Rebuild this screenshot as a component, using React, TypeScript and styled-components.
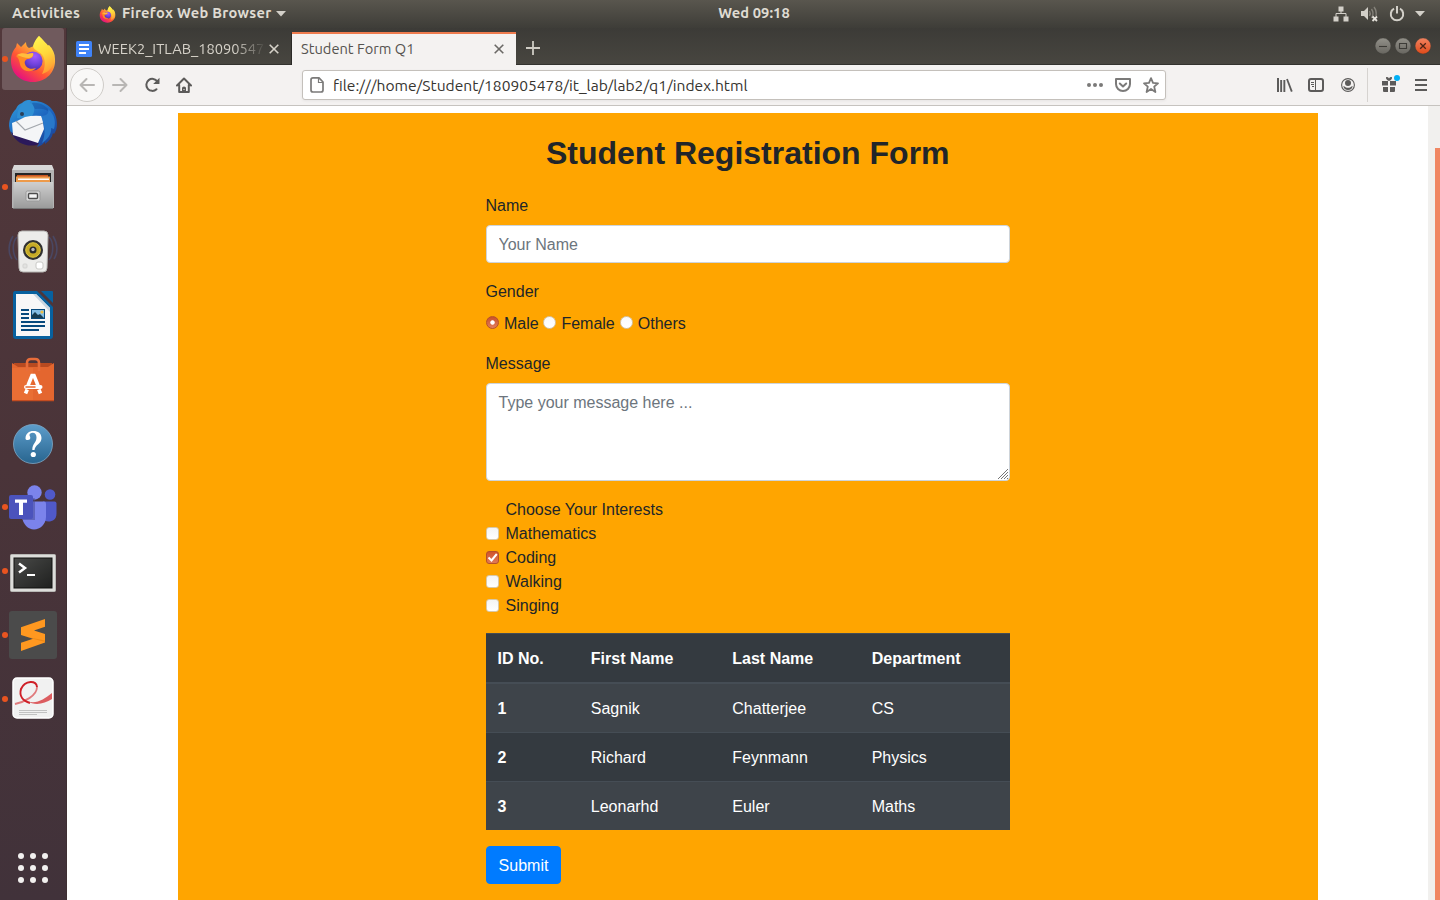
import React from 'react';
import styled, { createGlobalStyle } from 'styled-components';

const GlobalStyle = createGlobalStyle`
  * { box-sizing: border-box; }
  body { margin: 0; overflow: hidden; background: #fff; }
  svg { display: block; flex: none; }
`;

const uiFont = `'Ubuntu', 'Noto Sans', 'Open Sans', sans-serif`;
const pageFont = `'Liberation Sans', Arial, sans-serif`;

const Desktop = styled.div`
  width: 1440px;
  height: 900px;
  display: grid;
  grid-template: 28px 872px / 67px 1373px;
  overflow: hidden;
  font-family: ${uiFont};
`;

/* ---------- system bar ---------- */

const SystemBar = styled.header`
  grid-column: 1 / 3;
  display: grid;
  grid-template-columns: 1fr auto 1fr;
  align-items: center;
  padding: 0 15px 0 12px;
  background: linear-gradient(#59564e, #3e3d38);
  color: #dfdbd2;
  font-weight: 700;
  font-size: 14.667px;
  line-height: 26px;
  white-space: nowrap;
`;

const BarGroup = styled.div<{ $end?: boolean }>`
  display: flex;
  align-items: center;
  height: 28px;
  justify-content: ${(p) => (p.$end ? 'flex-end' : 'flex-start')};
`;

const BarText = styled.span<{ $width?: number; $spacing?: number }>`
  width: ${(p) => (p.$width ? `${p.$width}px` : 'auto')};
  padding-bottom: 2px;
  letter-spacing: ${(p) => p.$spacing ?? 0}px;
`;

const Clock = styled(BarText)`
  margin-left: 71px;
`;

const Gap = styled.span<{ $w: number }>`
  flex: none;
  width: ${(p) => p.$w}px;
`;

/* ---------- dock ---------- */

const DockColumn = styled.nav`
  display: flex;
  flex-direction: column;
  background: linear-gradient(#52383b, #4a3439 50%, #41323a);
  border-right: 1px solid #3f2f33;
`;

const DockItem = styled.div<{ $active?: boolean; $drop?: number }>`
  display: flex;
  align-items: center;
  justify-content: center;
  width: 62px;
  height: 62px;
  margin: 0 2px 2px;
  padding-top: ${(p) => Math.max(p.$drop ?? 0, 0)}px;
  padding-bottom: ${(p) => Math.max(-(p.$drop ?? 0), 0)}px;
  flex: none;
  border-radius: 3px;
  position: relative;
  background: ${(p) => (p.$active ? '#705a5d' : 'transparent')};
`;

const RunningDot = styled.span`
  position: absolute;
  left: 0;
  top: 28px;
  width: 6px;
  height: 6px;
  border-radius: 50%;
  background: #e95420;
`;

const AppsButton = styled.div`
  display: grid;
  grid-template-columns: repeat(3, 6px);
  gap: 6px;
  margin: auto 0 17px 18px;
`;

const AppsDot = styled.span`
  width: 6px;
  height: 6px;
  border-radius: 50%;
  background: #f2f0ef;
`;

/* ---------- browser window ---------- */

const Browser = styled.main`
  display: flex;
  flex-direction: column;
  min-width: 0;
`;

const TabStrip = styled.div`
  display: flex;
  align-items: flex-end;
  height: 37px;
  flex: none;
  background: linear-gradient(#3c3b37, #484640);
  box-shadow: inset 0 -1px #33322e;
`;

const Tab = styled.div<{ $active?: boolean }>`
  display: flex;
  align-items: center;
  width: ${(p) => (p.$active ? 224 : 225)}px;
  height: 33px;
  padding: 0 12px 1px 9px;
  font-size: 14.667px;
  color: ${(p) => (p.$active ? '#55534f' : '#d6d2c9')};
  background: ${(p) => (p.$active ? '#f4f2f1' : 'transparent')};
  border-top: 2px solid ${(p) => (p.$active ? '#ee7b4e' : 'transparent')};
  border-right: ${(p) => (p.$active ? 'none' : '1px solid #2b2a27')};
`;

const TabTitle = styled.span<{ $fade?: boolean }>`
  flex: 1;
  min-width: 0;
  overflow: hidden;
  white-space: nowrap;
  line-height: 22px;
  ${(p) => p.$fade && 'mask-image: linear-gradient(to right, #000 136px, transparent 168px);'}
`;

const NewTab = styled.div`
  display: flex;
  align-items: center;
  height: 34px;
  margin-left: 10px;
`;

const WindowButtons = styled.div`
  display: flex;
  gap: 4px;
  margin: 0 9px 11px auto;
`;

const Toolbar = styled.div`
  display: flex;
  align-items: center;
  height: 41px;
  flex: none;
  padding: 0 12px 0 3px;
  background: #f4f2f1;
  border-bottom: 1px solid #c6c3bf;
`;

const BackButton = styled.span`
  display: flex;
  align-items: center;
  justify-content: center;
  width: 34px;
  height: 34px;
  border: 1px solid #cfccc8;
  border-radius: 50%;
  background: #f9f8f7;
`;

const UrlBar = styled.div`
  display: flex;
  align-items: center;
  width: 864px;
  height: 30px;
  padding: 0 6px 0 7px;
  border: 1px solid #c4c0bb;
  border-radius: 3px;
  background: #fff;
  box-shadow: 0 1px 3px rgba(0, 0, 0, 0.06);
`;

const Url = styled.span`
  flex: 1;
  margin-left: 9px;
  padding-bottom: 1px;
  font-size: 15.6px;
  line-height: 22px;
  color: #36342f;
  white-space: nowrap;
`;

const Divider = styled.span`
  width: 1px;
  height: 34px;
  background: #d6d3d0;
`;

const Viewport = styled.div`
  display: flex;
  flex: 1;
  min-height: 0;
  background: #fff;
`;

const PageArea = styled.div`
  flex: 1;
  padding: 7px 110px 0 111px;
`;

const ScrollTrack = styled.div`
  width: 12px;
  padding: 42px 0 0 7px;
  background: #f1f0ee;
`;

const ScrollThumb = styled.div`
  height: 100%;
  background: #f08763;
`;

/* ---------- student form ---------- */

const Container = styled.section`
  height: 100%;
  padding: 21px 308px 0 307.5px;
  background: #ffa500;
  color: #212529;
  font: 16px/24px ${pageFont};
`;

const Title = styled.h1`
  margin: 0 -40px 21px;
  font-size: 32px;
  line-height: 38px;
  font-weight: 700;
  text-align: center;
`;

const Field = styled.div`
  margin-bottom: 16px;
`;

const Label = styled.label`
  display: block;
  padding-top: 1px;
  margin-bottom: 7px;
`;

const inputBase = `
  display: block;
  width: 100%;
  padding: 7px 12px 5px;
  border: 1px solid #ced4da;
  border-radius: 4px;
  background: #fff;
  color: #495057;
  font: 16px/24px ${pageFont};
  &::placeholder { color: #6c757d; opacity: 1; }
`;

const TextInput = styled.input`
  ${inputBase}
  height: 38px;
`;

const MessageWrap = styled.div`
  position: relative;
`;

const TextArea = styled.textarea`
  ${inputBase}
  height: 98px;
  resize: none;
`;

const Grip = styled.svg`
  position: absolute;
  right: 1px;
  bottom: 1px;
`;

const RadioRow = styled.div`
  display: flex;
  height: 24px;
  padding-top: 1px;
`;

const RadioOption = styled.label<{ $w: number }>`
  display: flex;
  width: ${(p) => p.$w}px;
  gap: 5px;
  white-space: nowrap;
`;

const RadioMark = styled.span<{ $on?: boolean }>`
  flex: none;
  width: 13px;
  height: 13px;
  margin: 4px 0 0 0.5px;
  border-radius: 50%;
  border: 1px solid ${(p) => (p.$on ? '#b5502a' : '#d3c6ae')};
  background: ${(p) =>
    p.$on
      ? 'radial-gradient(circle, #fff 0 1.8px, transparent 2.6px), linear-gradient(#c9502a, #e27e5c)'
      : 'linear-gradient(#fafafa, #fff)'};
`;

const CheckRow = styled.label`
  display: flex;
  height: 24px;
  padding-top: 1px;
  gap: 6px;
`;

const CheckMark = styled.span<{ $state: 'none' | 'on' | 'off' }>`
  flex: none;
  width: 13px;
  height: 13px;
  margin: 5px 0.5px 0 0.5px;
  border-radius: 3px;
  visibility: ${(p) => (p.$state === 'none' ? 'hidden' : 'visible')};
  border: 1px solid ${(p) => (p.$state === 'on' ? '#b5502a' : '#d8c8a8')};
  background: ${(p) => (p.$state === 'on' ? 'linear-gradient(#d0542c, #e07a57)' : 'linear-gradient(#f4f4f4, #fff)')};
`;

const Table = styled.div`
  margin-top: 16px;
  background: #343a40;
  color: #fff;
`;

const TableRow = styled.div<{ $kind: 'head' | 'odd' | 'even' }>`
  display: grid;
  grid-template-columns: 93.3px 141.5px 139.4px 1fr;
  height: ${(p) => (p.$kind === 'head' ? 50 : 49)}px;
  border-top: 1px solid #454d55;
  border-bottom: ${(p) => (p.$kind === 'head' ? '1px solid #454d55' : 'none')};
  background: ${(p) => (p.$kind === 'odd' ? '#3e444a' : 'transparent')};
`;

const Cell = styled.span<{ $bold?: boolean }>`
  padding: 13px 12px 0;
  font-weight: ${(p) => (p.$bold ? 700 : 400)};
`;

const Submit = styled.button`
  display: block;
  width: 75px;
  height: 38px;
  margin: 16px 0 0 0.5px;
  padding: 2px 0 0;
  border: 1px solid #007bff;
  border-radius: 4px;
  background: #007bff;
  color: #fff;
  font: 16px/24px ${pageFont};
`;

/* ---------- drawings ---------- */

const FirefoxLogo = ({ size, id }: { size: number; id: string }) => (
  <svg width={size} height={size} viewBox="0 0 48 48">
    <defs>
      <linearGradient id={`${id}a`} x1="0.85" y1="0.1" x2="0.25" y2="0.95">
        <stop offset="0" stopColor="#fff44f" />
        <stop offset="0.35" stopColor="#ffa436" />
        <stop offset="0.65" stopColor="#ff5634" />
        <stop offset="1" stopColor="#e5127e" />
      </linearGradient>
      <radialGradient id={`${id}b`} cx="0.6" cy="0.25" r="0.8">
        <stop offset="0" stopColor="#a45cff" />
        <stop offset="0.6" stopColor="#6b40d8" />
        <stop offset="1" stopColor="#4b2a9e" />
      </radialGradient>
      <linearGradient id={`${id}c`} x1="0.3" y1="0" x2="0.6" y2="1">
        <stop offset="0" stopColor="#fff44f" />
        <stop offset="0.5" stopColor="#ffd83b" />
        <stop offset="1" stopColor="#ff9a33" />
      </linearGradient>
    </defs>
    <path fill={`url(#${id}a)`} d="M30 1c4 3 6 7 8 10l2-1c4 4 6 9 6 14 1 13-9 23-22 23C11 47 2 38 2 26c0-5 1-9 5-14l1-4 4 4 5-5c0 3 1 5 3 6l5-2c1-4 2-7 5-10z" />
    <path fill={`url(#${id}c)`} d="M30 1c3 4 7 6 10 11 5 5 6 11 4 17-2 6-7 9-11 10 3-5 4-13 1-18-3-5-9-5-10-10 1-4 3-7 6-10z" />
    <circle cx="24" cy="26" r="9.6" fill={`url(#${id}b)`} />
    <path fill="#ff8a24" d="M7 21c3-3 7-3 11-2l6-1c1 3-1 5-4 6-3 0-5 2-4 5 1 4 6 6 11 4-4 5-12 4-15-1-2-4-1-8-5-11z" />
    <path fill="#ffbd3e" d="M8 20c3-2 7-2 10-1l6-1c1 2-1 5-4 5-5 0-8-2-12-3z" />
  </svg>
);

const Thunderbird = () => (
  <svg width="50" height="50" viewBox="0 0 50 50">
    <defs>
      <linearGradient id="tb" x1="0.2" y1="0" x2="0.9" y2="1">
        <stop offset="0" stopColor="#2f96d8" />
        <stop offset="0.5" stopColor="#1c63be" />
        <stop offset="1" stopColor="#1b3e91" />
      </linearGradient>
    </defs>
    <path fill="url(#tb)" d="M14 4c3-3 7-4 10-2 14-1 25 9 25 23 0 4-1 7-3 10l-1-1c-1 5-4 8-8 11v-2c-2 2-4 4-8 5l2-4C15 48 2 39 1 27 1 20 4 14 8 10c1-3 3-5 6-6z" />
    <path fill="#2f8fd4" d="M9 19C9 9 15 1 23 1c-2 2-1 3 1 4 3 3 3 8 0 12l-6 3z" />
    <path fill="#123e8b" d="M24 4c8-1 15 3 19 10-5-4-9-5-16-4z" opacity=".35" />
    <path fill="#2b195b" d="M3 33l8 4 20 7-2 2c-10 2-21-1-26-13z" />
    <path fill="#f4f5f7" d="M4 24l5-2 8-4q8-2 17-1l2 13-6 14-25-8z" />
    <path fill="none" stroke="#a3a7ad" strokeWidth="1.100" d="M8 22l9 9 18-7" />
    <path fill="#2878ca" d="M33 17c7 0 8-4 7-7 7 6 8 13 6 20l-3-1c1 6-4 12-9 15 4-8 3-18-1-27z" />
    <circle cx="14" cy="15" r="2" fill="#2a3f57" />
  </svg>
);

const FilesIcon = () => (
  <svg width="44" height="46" viewBox="0 0 44 46">
    <defs>
      <linearGradient id="fi" x1="0" y1="0" x2="0" y2="1">
        <stop offset="0" stopColor="#cfcfcf" />
        <stop offset="1" stopColor="#9b9b9b" />
      </linearGradient>
    </defs>
    <path fill="#d8d8d8" d="M3 1h38l2 5v38H1V6z" />
    <path fill="#b4b4b4" d="M1 6h42v38H1z" />
    <rect x="4" y="9" width="36" height="11" fill="#252525" />
    <path fill="#c95520" d="M6 11h31v7H6z" />
    <path fill="#ed9a4a" d="M5 12.500h34v7H5z" />
    <path fill="#fff" d="M7 14.500h31v1.500H7z" />
    <rect x="2.500" y="18" width="39.500" height="26" fill="url(#fi)" />
    <path fill="#777" d="M2 44h40v1H2z" />
    <rect x="15" y="27" width="14" height="10" rx="1.500" fill="#d8d8d8" stroke="#999" />
    <rect x="17.500" y="29.500" width="9" height="5" rx="1" fill="#f5f5f5" stroke="#4d4d4d" strokeWidth="1.400" />
  </svg>
);

const Speaker = () => (
  <svg width="50" height="46" viewBox="0 0 50 46">
    <g fill="none" stroke="#46588a" strokeWidth="1.600" opacity=".5">
      <path d="M9 8C4 13 4 25 9 31M5 7C0 15 0 24 4 30M41 8c5 5 5 17 0 23M45 7c5 8 5 17 1 23" />
    </g>
    <path fill="#ececea" stroke="#b6b6b3" d="M14 2h22q4 0 4 4l-1 33q0 4-4 4H15q-4 0-4-4L10 6q0-4 4-4z" />
    <circle cx="25" cy="21" r="10" fill="#313131" />
    <circle cx="25" cy="21" r="7.300" fill="#c6aa26" stroke="#e0c940" />
    <circle cx="25" cy="21" r="3.500" fill="#292a2d" />
    <circle cx="25" cy="20.500" r="1.700" fill="#b9b9b9" />
    <rect x="28" y="33" width="7" height="7" rx="2" fill="#fff" stroke="#c9c9c6" />
    <rect x="15" y="35" width="4" height="4" rx="1" fill="#e2e2e0" stroke="#d3d3d1" />
  </svg>
);

const WriterIcon = () => (
  <svg width="42" height="48" viewBox="0 0 42 48">
    <path fill="#07619f" d="M3 0h22l16 16v29q0 3-3 3H4q-3 0-3-3V3q0-3 2-3z" />
    <path fill="#f7f7f7" d="M4 3h20l14 14v28H4z" />
    <path fill="#c9d5e0" d="M24 3l14 14v4L21 3z" />
    <path fill="#07619f" d="M29 0h11q1 0 1 1v11z" />
    <path fill="#07497c" d="M9 18h8v2H9zm0 4h8v2H9zm0 4h8v2H9zm0 4h24v2H9zm0 4h24v2H9zm0 4h18v2H9z" />
    <rect x="19.500" y="18.500" width="13" height="9" fill="#83bde4" stroke="#07497c" />
    <circle cx="30" cy="21" r="1.600" fill="#efbe42" />
    <path fill="#173c50" d="M20 27v-3l3-3 3 3 2-1 4 4z" />
  </svg>
);

const SoftwareIcon = () => (
  <svg width="44" height="46" viewBox="0 0 44 46">
    <path fill="#b84a20" d="M3 6h38l2 6H1z" />
    <path fill="#e4662f" d="M1 6l6 4h30l6-4v37H1z" />
    <path fill="#f17b3d" d="M1 11h21v32H1z" opacity=".4" />
    <path fill="none" stroke="#e86d3a" strokeWidth="2.600" d="M16 14V6q0-4 4-4h4q4 0 4 4v8" />
    <path fill="#c44c20" d="M1 43h42v1.300H1z" />
    <path fill="none" stroke="#fff" strokeWidth="3.600" d="M14.500 36.500l1.700-4M29.500 36.500l-1.700-4M17 28.500l4-10h2l4 10" />
    <path stroke="#fff" strokeWidth="4" strokeLinecap="round" d="M15 30h14.500" />
    <path stroke="#e66a32" strokeWidth="1.500" strokeLinecap="round" d="M15 30h9" />
  </svg>
);

const HelpIcon = () => (
  <svg width="42" height="42" viewBox="0 0 42 42">
    <defs>
      <linearGradient id="he" x1="0" y1="0" x2="0" y2="1">
        <stop offset="0" stopColor="#5d9dcb" />
        <stop offset="1" stopColor="#28658f" />
      </linearGradient>
    </defs>
    <circle cx="21" cy="21" r="19.500" fill="url(#he)" stroke="#7fa9c8" strokeWidth=".8" />
    <path fill="#fff" d="M13.500 15.500c0-5 3.500-7.500 8-7.500s8 2.500 8 7c0 6-6.500 6.500-7 12h-2.200c0-6.500 4.200-7.500 4.200-12.500 0-3-1.500-4.700-3.800-4.700-2 0-3.200 1-3.200 2.200 0 1 .8 1.500.8 2.700 0 1.300-1 2.300-2.400 2.300s-2.400-.5-2.400-1.500z" />
    <circle cx="21.300" cy="31.500" r="2.600" fill="#fff" />
  </svg>
);

const TeamsIcon = () => (
  <svg width="50" height="46" viewBox="0 0 50 46">
    <circle cx="42" cy="10.500" r="5.300" fill="#5059c9" />
    <path fill="#5059c9" d="M35 17.500h11.500q2 0 2 2v10c0 6-4 8-8 8-3 0-5-1-7-3z" />
    <circle cx="26.500" cy="8.500" r="7.200" fill="#7b83eb" />
    <path fill="#7b83eb" d="M16 17.500h20q2 0 2 2V33c0 7-6 12.500-12 12.500S15 40 14 33z" />
    <path fill="#444791" d="M15 14h11q1 0 1 1v21H15z" opacity=".5" />
    <rect x="1" y="11" width="24" height="24" rx="2" fill="#4b53bc" />
    <path fill="#fff" d="M7 15.500h12v3.300h-4V31h-4V18.800H7z" />
  </svg>
);

const TerminalIcon = () => (
  <svg width="46" height="38" viewBox="0 0 46 38">
    <defs>
      <linearGradient id="te" x1="0" y1="0" x2="1" y2="1">
        <stop offset="0" stopColor="#494a48" />
        <stop offset="1" stopColor="#1f201f" />
      </linearGradient>
    </defs>
    <rect x=".5" y=".5" width="45" height="37" rx="1" fill="#ddddda" stroke="#b8b8b5" />
    <rect x="4" y="4" width="38" height="30" fill="url(#te)" stroke="#11110f" />
    <path fill="none" stroke="#fff" strokeWidth="2.500" d="M9 9.500l6 4.500-6 4.500" />
    <path fill="#fff" d="M17 20h8v2h-8z" />
  </svg>
);

const SublimeIcon = () => (
  <svg width="48" height="48" viewBox="0 0 48 48">
    <rect width="48" height="48" rx="3" fill="#4b4b4b" />
    <path fill="#ff9820" d="M12 16.300L36 8v7.800L25 19.500 36 23v8.500L12 40v-8.300L24 27.800 12 24z" />
    <path fill="#d97a0c" d="M18 26l6 1.800 12 3.200v-1.500z" opacity=".5" />
  </svg>
);

const ReaderIcon = () => (
  <svg width="42" height="42" viewBox="0 0 42 42">
    <rect x="1" y="1" width="40" height="40" rx="4" fill="#f1f1f1" stroke="#fff" strokeWidth="1.500" />
    <path stroke="#c2c2c2" d="M7 33.500h28M7 35.500h28M7 37.500h18" />
    <path fill="none" stroke="#e07a7c" strokeWidth="1.800" d="M3 27C12 25 25 19 25 10" />
    <path fill="none" stroke="#cf1f27" strokeWidth="2" d="M25 10c0-7-12-7-16 2-2 7 2 12 9 14" />
    <path fill="#dc5d60" d="M15 24c9 4 17-2 25-8v6c-8 5-17 7-25 2z" />
  </svg>
);

const DocsIcon = () => (
  <svg width="16" height="16" viewBox="0 0 16 16">
    <rect width="16" height="16" rx="1.500" fill="#3f83f8" />
    <path fill="#fff" d="M3 3h10v2H3zm0 4h10v2H3zm0 4h7v2H3z" />
  </svg>
);

const Cross = ({ color }: { color: string }) => (
  <svg width="10" height="10" viewBox="0 0 10 10">
    <path stroke={color} strokeWidth="1.600" d="M.7.7l8.600 8.600M9.300.7L.7 9.300" />
  </svg>
);

const Caret = () => (
  <svg width="10" height="6" viewBox="0 0 10 6">
    <path fill="#d3d0c9" d="M0 0h10L5 5.500z" />
  </svg>
);

const NetworkIcon = () => (
  <svg width="16" height="16" viewBox="0 0 16 16">
    <path fill="#d3d0c9" d="M5.500 0.500h5v5h-5zM.5 10.500h5v5h-5zm10 0h5v5h-5z" />
    <path fill="none" stroke="#d3d0c9" d="M8 5v3M3 11V7.500h10V11" />
  </svg>
);

const MutedIcon = () => (
  <svg width="17" height="16" viewBox="0 0 17 16">
    <path fill="#d3d0c9" d="M0 5h3l4-4v13l-4-4H0z" />
    <path fill="none" stroke="#85827a" strokeWidth="1.400" d="M8.500 5q1.500 2.500 0 5M10.500 3q3 4.500 0 9M13 1q3 4 2 9" />
    <path stroke="#e6e3dc" strokeWidth="1.800" d="M11.500 10.500l4.500 4.500M16 10.500L11.500 15" />
  </svg>
);

const PowerIcon = () => (
  <svg width="16" height="16" viewBox="0 0 16 16">
    <path fill="none" stroke="#d3d0c9" strokeWidth="2" d="M5 2.700a6.200 6.200 0 1 0 6 0M8 0v7.500" />
  </svg>
);

const WindowButton = ({ kind }: { kind: 'min' | 'max' | 'close' }) => (
  <svg width="16" height="16" viewBox="0 0 16 16">
    <defs>
      <linearGradient id={`wb-${kind}`} x1="0" y1="0" x2="0" y2="1">
        <stop offset="0" stopColor={kind === 'close' ? '#f28360' : '#93918a'} />
        <stop offset="1" stopColor={kind === 'close' ? '#df4a19' : '#686660'} />
      </linearGradient>
    </defs>
    <circle cx="8" cy="8" r="7.900" fill={`url(#wb-${kind})`} stroke="#34332f" strokeWidth=".3" />
    {kind === 'min' && <path stroke="#3c3b37" strokeWidth="1.100" d="M4 8.500h8" />}
    {kind === 'max' && <path fill="none" stroke="#3c3b37" strokeWidth="1.100" d="M4.500 5.500h7v5h-7z" />}
    {kind === 'close' && <path stroke="#4c2416" strokeWidth="1.300" d="M5.200 5.200l5.600 5.600M10.800 5.200l-5.600 5.600" />}
  </svg>
);

const Arrow = ({ flip }: { flip?: boolean }) => (
  <svg width="16" height="16" viewBox="0 0 16 16">
    <path
      fill="none"
      stroke="#b8b6b4"
      strokeWidth="2"
      strokeLinecap="round"
      strokeLinejoin="round"
      transform={flip ? 'matrix(-1 0 0 1 16 0)' : undefined}
      d="M15 8H1.500M7.500 2L1.500 8l6 6"
    />
  </svg>
);

const Reload = () => (
  <svg width="16" height="16" viewBox="0 0 16 16">
    <path fill="none" stroke="#5c5b5a" strokeWidth="2" strokeLinecap="round" d="M13.300 4.500A6 6 0 1 0 12.500 12.200" />
    <path fill="#5c5b5a" d="M15.500.8v5.700q0 .5-.5.500H9.200z" />
  </svg>
);

const Home = () => (
  <svg width="16" height="16" viewBox="0 0 16 16">
    <path fill="none" stroke="#5c5b5a" strokeWidth="2" strokeLinecap="round" strokeLinejoin="round" d="M1 8.500L8 1.500l7 7M3.200 8v7h9.600V8" />
    <path fill="#5c5b5a" d="M6 15v-4q0-1.500 2-1.500t2 1.500v4z" />
    <path fill="#f4f2f1" d="M7.500 12h1v1h-1z" />
  </svg>
);

const FileIcon = () => (
  <svg width="14" height="16" viewBox="0 0 14 16">
    <path fill="none" stroke="#7b7a79" strokeWidth="1.700" strokeLinejoin="round" d="M3 .9h6L13 5v8q0 2-2 2H3q-2 0-2-2V2.900q0-2 2-2z" />
    <path fill="none" stroke="#7b7a79" strokeWidth="1.200" d="M8.500 1v4.500H13" />
  </svg>
);

const Dots = () => (
  <svg width="16" height="4" viewBox="0 0 16 4">
    <g fill="#7b7a79">
      <circle cx="2" cy="2" r="2" />
      <circle cx="8" cy="2" r="2" />
      <circle cx="14" cy="2" r="2" />
    </g>
  </svg>
);

const Pocket = () => (
  <svg width="16" height="14" viewBox="0 0 16 14">
    <path fill="none" stroke="#7b7a79" strokeWidth="2" strokeLinejoin="round" d="M1 1h14v5a7 7 0 0 1-14 0z" />
    <path fill="none" stroke="#7b7a79" strokeWidth="2" strokeLinecap="round" strokeLinejoin="round" d="M4.800 5.500L8 8.500l3.200-3" />
  </svg>
);

const Star = () => (
  <svg width="16" height="16" viewBox="0 0 16 16">
    <path fill="none" stroke="#7b7a79" strokeWidth="1.800" strokeLinejoin="round" d="M8 1.200l2 4.600 5 .5-3.800 3.300L12.400 15 8 12l-4.400 3 1.200-5.400L1 6.300l5-.5z" />
  </svg>
);

const Library = () => (
  <svg width="16" height="14" viewBox="0 0 16 14">
    <path fill="#5c5b5a" d="M0 0h2v14H0zM3.200 2h1.900v12H3.200zM6.400 2h1.900v12H6.400z" />
    <path stroke="#5c5b5a" strokeWidth="1.800" d="M10 1l4.800 12.600" />
  </svg>
);

const Sidebar = () => (
  <svg width="16" height="14" viewBox="0 0 16 14">
    <rect x="1" y="1" width="14" height="12" rx="2" fill="none" stroke="#5c5b5a" strokeWidth="2" />
    <path stroke="#5c5b5a" d="M7.500 1v12M3 4.500h3M3 6.500h3M4 8.500h2" />
  </svg>
);

const Account = () => (
  <svg width="14" height="14" viewBox="0 0 14 14">
    <circle cx="7" cy="7" r="6.400" fill="none" stroke="#5c5b5a" strokeWidth="1.100" />
    <circle cx="7" cy="5" r="3" fill="#5c5b5a" />
    <path fill="#5c5b5a" d="M2.300 8q1.500.3 2.200 1.200Q7 10.500 9.500 9.200q.7-.9 2.200-1.200Q11 12 7 12T2.300 8z" />
  </svg>
);

const Gift = () => (
  <svg width="20" height="20" viewBox="0 0 20 20">
    <path fill="#5c5b5a" d="M1 6h6v4.500H1zm8 0h6v4.500H9zM2 12h5v5H3q-1 0-1-1zm7 0h5v4q0 1-1 1H9zM5 2.200q2-.5 3 1.300 1-1.800 3-1.300.5 2-3 3.800-3.500-1.800-3-3.800z" />
    <circle cx="16" cy="3" r="3" fill="#00b0f6" />
  </svg>
);

const Menu = () => (
  <svg width="12" height="12" viewBox="0 0 12 12">
    <path fill="#5c5b5a" d="M0 0h12v2H0zM0 5h12v2H0zM0 10h12v2H0z" />
  </svg>
);

/* ---------- data ---------- */

const dock: { icon: React.ReactNode; running?: boolean; active?: boolean; drop?: number }[] = [
  { icon: <FirefoxLogo size={48} id="fxl" />, running: true, active: true },
  { icon: <Thunderbird />, drop: 1 },
  { icon: <FilesIcon />, running: true },
  { icon: <Speaker />, drop: 1 },
  { icon: <WriterIcon /> },
  { icon: <SoftwareIcon />, drop: 2 },
  { icon: <HelpIcon />, drop: 2 },
  { icon: <TeamsIcon />, running: true },
  { icon: <TerminalIcon />, running: true, drop: 4 },
  { icon: <SublimeIcon />, running: true },
  { icon: <ReaderIcon />, running: true, drop: -2 },
];

const interests: [string, 'none' | 'on' | 'off'][] = [
  ['Choose Your Interests', 'none'],
  ['Mathematics', 'off'],
  ['Coding', 'on'],
  ['Walking', 'off'],
  ['Singing', 'off'],
];

const students = [
  ['1', 'Sagnik', 'Chatterjee', 'CS'],
  ['2', 'Richard', 'Feynmann', 'Physics'],
  ['3', 'Leonarhd', 'Euler', 'Maths'],
];

export default function App() {
  return (
    <Desktop>
      <GlobalStyle />
      <SystemBar>
        <BarGroup>
          <BarText $width={87} $spacing={0.3}>Activities</BarText>
          <FirefoxLogo size={17} id="fxs" />
          <Gap $w={6} />
          <BarText $width={154} $spacing={0.3}>Firefox Web Browser</BarText>
          <Caret />
        </BarGroup>
        <Clock $spacing={0.1}>Wed 09:18</Clock>
        <BarGroup $end>
          <NetworkIcon />
          <Gap $w={12} />
          <MutedIcon />
          <Gap $w={11} />
          <PowerIcon />
          <Gap $w={10} />
          <Caret />
        </BarGroup>
      </SystemBar>

      <DockColumn>
        {dock.map((d, i) => (
          <DockItem key={i} $active={d.active} $drop={d.drop}>
            {d.running && <RunningDot />}
            {d.icon}
          </DockItem>
        ))}
        <AppsButton>
          {Array.from({ length: 9 }, (_, i) => (
            <AppsDot key={i} />
          ))}
        </AppsButton>
      </DockColumn>

      <Browser>
        <TabStrip>
          <Tab>
            <DocsIcon />
            <Gap $w={6} />
            <TabTitle $fade>WEEK2_ITLAB_180905478</TabTitle>
            <Gap $w={5} />
            <Cross color="#d6d2c9" />
          </Tab>
          <Tab $active>
            <TabTitle>Student Form Q1</TabTitle>
            <Cross color="#6b6966" />
          </Tab>
          <NewTab>
            <svg width="14" height="14" viewBox="0 0 14 14">
              <path stroke="#cfccc4" strokeWidth="1.800" d="M7 0v14M0 7h14" />
            </svg>
          </NewTab>
          <WindowButtons>
            <WindowButton kind="min" />
            <WindowButton kind="max" />
            <WindowButton kind="close" />
          </WindowButtons>
        </TabStrip>

        <Toolbar>
          <BackButton>
            <Arrow />
          </BackButton>
          <Gap $w={8} />
          <Arrow flip />
          <Gap $w={16} />
          <Reload />
          <Gap $w={16} />
          <Home />
          <Gap $w={110} />
          <UrlBar>
            <FileIcon />
            <Url>file:///home/Student/180905478/it_lab/lab2/q1/index.html</Url>
            <Dots />
            <Gap $w={12} />
            <Pocket />
            <Gap $w={12} />
            <Star />
          </UrlBar>
          <Gap $w={111} />
          <Library />
          <Gap $w={15} />
          <Sidebar />
          <Gap $w={17} />
          <Account />
          <Gap $w={12} />
          <Divider />
          <Gap $w={13} />
          <Gift />
          <Gap $w={14} />
          <Menu />
        </Toolbar>

        <Viewport>
          <PageArea>
            <Container>
              <Title>Student Registration Form</Title>
              <Field>
                <Label>Name</Label>
                <TextInput placeholder="Your Name" />
              </Field>
              <Field>
                <Label>Gender</Label>
                <RadioRow>
                  <RadioOption $w={57.4}><RadioMark $on />Male</RadioOption>
                  <RadioOption $w={76.4}><RadioMark />Female</RadioOption>
                  <RadioOption $w={80}><RadioMark />Others</RadioOption>
                </RadioRow>
              </Field>
              <Field>
                <Label>Message</Label>
                <MessageWrap>
                  <TextArea placeholder="Type your message here ..." />
                  <Grip width="12" height="12" viewBox="0 0 12 12">
                    <path stroke="#777" d="M1 11L11 1M4 11l7-7M7 11l4-4M10 11l1-1" />
                  </Grip>
                </MessageWrap>
              </Field>
              {interests.map(([name, state]) => (
                <CheckRow key={name}>
                  <CheckMark $state={state}>
                    {state === 'on' && (
                      <svg width="11" height="11" viewBox="0 0 11 11">
                        <path fill="none" stroke="#fff" strokeWidth="2" d="M1.500 5.500l3 3L9.800 2" />
                      </svg>
                    )}
                  </CheckMark>
                  {name}
                </CheckRow>
              ))}
              <Table>
                <TableRow $kind="head">
                  <Cell $bold>ID No.</Cell>
                  <Cell $bold>First Name</Cell>
                  <Cell $bold>Last Name</Cell>
                  <Cell $bold>Department</Cell>
                </TableRow>
                {students.map((row, i) => (
                  <TableRow key={row[0]} $kind={i % 2 ? 'even' : 'odd'}>
                    {row.map((text, c) => (
                      <Cell key={c} $bold={c === 0}>{text}</Cell>
                    ))}
                  </TableRow>
                ))}
              </Table>
              <Submit>Submit</Submit>
            </Container>
          </PageArea>
          <ScrollTrack>
            <ScrollThumb />
          </ScrollTrack>
        </Viewport>
      </Browser>
    </Desktop>
  );
}
